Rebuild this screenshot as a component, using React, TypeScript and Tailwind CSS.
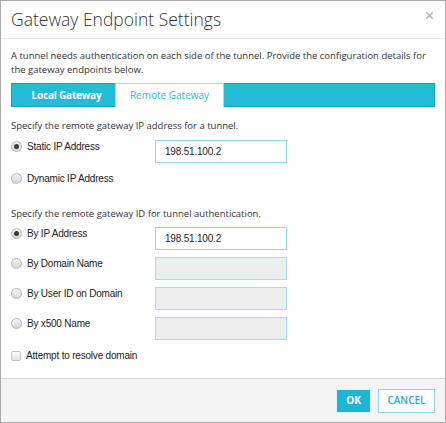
import { X } from 'lucide-react';

type RowProps = {
  label: string;
  checked?: boolean;
  value?: string;
  disabled?: boolean;
  withInput?: boolean;
};

function Radio({ checked }: { checked?: boolean }) {
  return (
    <span className="relative flex h-[11px] w-[11px] shrink-0 items-center justify-center rounded-full border border-[#b4b4b4] bg-gradient-to-b from-[#f4f4f4] to-[#d8d8d8]">
      {checked && <span className="h-[5px] w-[5px] rounded-full bg-[#3a3a3a]" />}
    </span>
  );
}

function OptionRow({ label, checked, value, disabled, withInput = true }: RowProps) {
  return (
    <div className="flex items-start">
      <label className="mt-[1px] flex w-[144px] items-center gap-[5px] text-[10px] leading-[11px] tracking-[-0.2px] text-[#222] [font-family:'Liberation_Sans',Arial,sans-serif]">
        <Radio checked={checked} />
        {label}
      </label>
      {withInput &&
        (disabled ? (
          <div className="h-[23px] w-[132px] border border-[#a3e0ee] bg-[#ededed]" />
        ) : (
          <input
            readOnly
            value={value}
            className="h-[23px] w-[132px] border border-[#8fd9ea] bg-white px-[9px] text-[10px] tracking-[-0.2px] text-[#222] outline-none [font-family:'Liberation_Sans',Arial,sans-serif]"
          />
        ))}
    </div>
  );
}

export default function App() {
  return (
    <div className="flex h-[423px] w-[446px] flex-col border border-[#ababab] bg-white [font-family:'Open_Sans',sans-serif]">
      <header className="flex h-[38px] shrink-0 items-center justify-between border-b border-[#e6e6e6] pl-[10px] pr-[10px]">
        <h1 className="text-[17.5px] font-light text-[#333]">Gateway Endpoint Settings</h1>
        <X size={11} strokeWidth={3} className="mb-[8px] text-[#b0b0b0]" />
      </header>

      <div className="flex-1 px-[10px] pt-[10px]">
        <p className="w-[422px] text-[9.5px] leading-[14px] text-[#333]">
          A tunnel needs authentication on each side of the tunnel. Provide the configuration details for the
          gateway endpoints below.
        </p>

        <div className="mt-[6px] flex h-[24px] border border-[#0ea6c4] bg-[#23bcd6]">
          <button className="w-[103px] pl-[6px] text-[10px] font-bold tracking-[-0.2px] text-white">
            Local Gateway
          </button>
          <button className="-mb-px -mt-px w-[109px] border border-b-0 border-[#9ddcec] bg-white text-[10px] text-[#2fb9d8]">
            Remote Gateway
          </button>
        </div>

        <p className="mt-[12px] text-[9.5px] leading-[14px] text-[#333]">
          Specify the remote gateway IP address for a tunnel.
        </p>
        <div className="mt-[7px] flex flex-col gap-[9px]">
          <OptionRow label="Static IP Address" checked value="198.51.100.2" />
          <OptionRow label="Dynamic IP Address" withInput={false} />
        </div>

        <p className="mt-[23px] text-[9.5px] leading-[14px] text-[#333]">
          Specify the remote gateway ID for tunnel authentication.
        </p>
        <div className="mt-[6px] flex flex-col gap-[7px]">
          <OptionRow label="By IP Address" checked value="198.51.100.2" />
          <OptionRow label="By Domain Name" disabled />
          <OptionRow label="By User ID on Domain" disabled />
          <OptionRow label="By x500 Name" disabled />
        </div>

        <label className="mt-[10px] flex items-center gap-[5px] text-[10px] leading-[11px] tracking-[-0.2px] text-[#222] [font-family:'Liberation_Sans',Arial,sans-serif]">
          <span className="h-[10px] w-[10px] rounded-[2px] border border-[#c4c4c4] bg-gradient-to-b from-[#fafafa] to-[#e6e6e6]" />
          Attempt to resolve domain
        </label>
      </div>

      <footer className="flex h-[44px] shrink-0 items-center justify-end gap-[7px] border-t border-[#d9d9d9] bg-[#f4f4f4] px-[10px]">
        <button className="h-[24px] w-[35px] border border-[#dff5fa] bg-[#1fb6d4] text-[10px] font-bold text-white">
          OK
        </button>
        <button className="h-[24px] w-[57px] border border-[#8fd9ea] bg-white text-[10px] font-semibold text-[#1fb0d0]">
          CANCEL
        </button>
      </footer>
    </div>
  );
}
